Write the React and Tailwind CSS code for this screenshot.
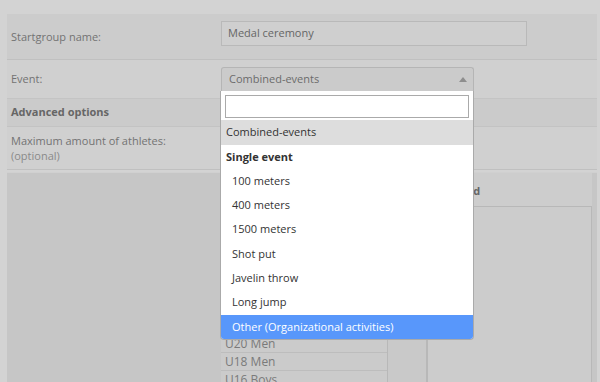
const events = ['100 meters', '400 meters', '1500 meters', 'Shot put', 'Javelin throw', 'Long jump'];
const classes = ['U20 Men', 'U18 Men', 'U16 Boys'];

const Dropdown = () => (
  <div className="absolute left-[-1px] top-[24px] z-10 w-[254px] bg-white border border-[#aaa] border-t-0 rounded-b-[4px] text-[#333] overflow-hidden">
    {/* Search */}
    <div className="px-[4px] pt-[4px] pb-[2px]">
      <div className="h-[23px] border border-[#aaa] bg-white" />
    </div>
    <div className="h-[25px] flex items-center px-[5px] bg-[#ddd]">Combined-events</div>
    <div className="h-[24px] flex items-center px-[5px] font-bold">Single event</div>
    {events.map((e) => (
      <div key={e} className="h-[24.3px] flex items-center pl-[11px]">{e}</div>
    ))}
    <div className="h-[24.5px] flex items-center pl-[11px] bg-[#5897fb] text-white">Other (Organizational activities)</div>
  </div>
);

export default function App() {
  return (
    <div
      className="w-full h-[382px] overflow-hidden bg-[#d3d3d3] pt-[14px] pl-[7px] pr-[3px] text-[11px] text-[#737373]"
      style={{ fontFamily: '"Open Sans", "Noto Sans", sans-serif' }}
    >
      {/* Startgroup name */}
      <div className="h-[46px] flex items-center bg-[#cccccc] border-b border-[#c0c0c0]">
        <div className="w-[214px] pl-[4px] pt-[2px]">Startgroup name:</div>
        <div className="w-[306px] h-[25px] -mt-[7px] flex items-center px-[6px] bg-[#cfcfcf] border border-[#b9b9b9] text-[#666]">
          Medal ceremony
        </div>
      </div>

      {/* Event */}
      <div className="h-[39px] flex items-center bg-[#d0d0d0] border-b border-[#c4c4c4]">
        <div className="w-[214px] pl-[4px]">Event:</div>
        <div className="relative w-[253px] h-[24px]">
          <div className="h-full flex items-center justify-between pl-[7px] pr-[6px] bg-[#cbcbcb] border border-[#b5b5b5] border-b-0 rounded-t-[3px] text-[#6b6b6b]">
            <span>Combined-events</span>
            <svg width="8" height="5" viewBox="0 0 8 5"><path d="M0 5 L4 0 L8 5 Z" fill="#8e8e8e" /></svg>
          </div>
          <Dropdown />
        </div>
      </div>

      {/* Advanced options */}
      <div className="h-[28px] flex items-center pl-[4px] bg-[#cbcbcb] border-b border-[#c3c3c3] font-bold text-[#666]">
        Advanced options
      </div>

      {/* Maximum athletes */}
      <div className="h-[43px] flex flex-col justify-center pl-[4px] bg-[#d0d0d0] border-b border-[#c0c0c0] leading-[15px]">
        <span>Maximum amount of athletes:</span>
        <span className="text-[#8a8a8a]">(optional)</span>
      </div>

      {/* Class picker */}
      <div className="mt-[2px] h-[220px] flex bg-[#c6c6c6] border-t border-[#d0d0d0]">
        <div className="w-[214px]" />
        <div className="w-[167px] flex flex-col overflow-hidden border-r border-[#b8b8b8]">
          <div className="h-[161px] shrink-0" />
          {classes.map((c) => (
            <div key={c} className="h-[18px] shrink-0 flex items-center pl-[4px] bg-[#cbcbcb] border-t border-[#bdbdbd] text-[12px] text-[#7a7a7a]">
              {c}
            </div>
          ))}
        </div>
        <div className="w-[39px] bg-[#c9c9c9] border-r border-[#b8b8b8]" />
        <div className="flex-1 flex flex-col pr-[5px]">
          <div className="h-[33px] flex items-center pl-[7px] pt-[4px] bg-[#cdcdcd] font-bold text-[#666]">Selected</div>
          <div className="flex-1 bg-[#cccccc] border border-[#b8b8b8]" />
        </div>
      </div>
    </div>
  );
}
